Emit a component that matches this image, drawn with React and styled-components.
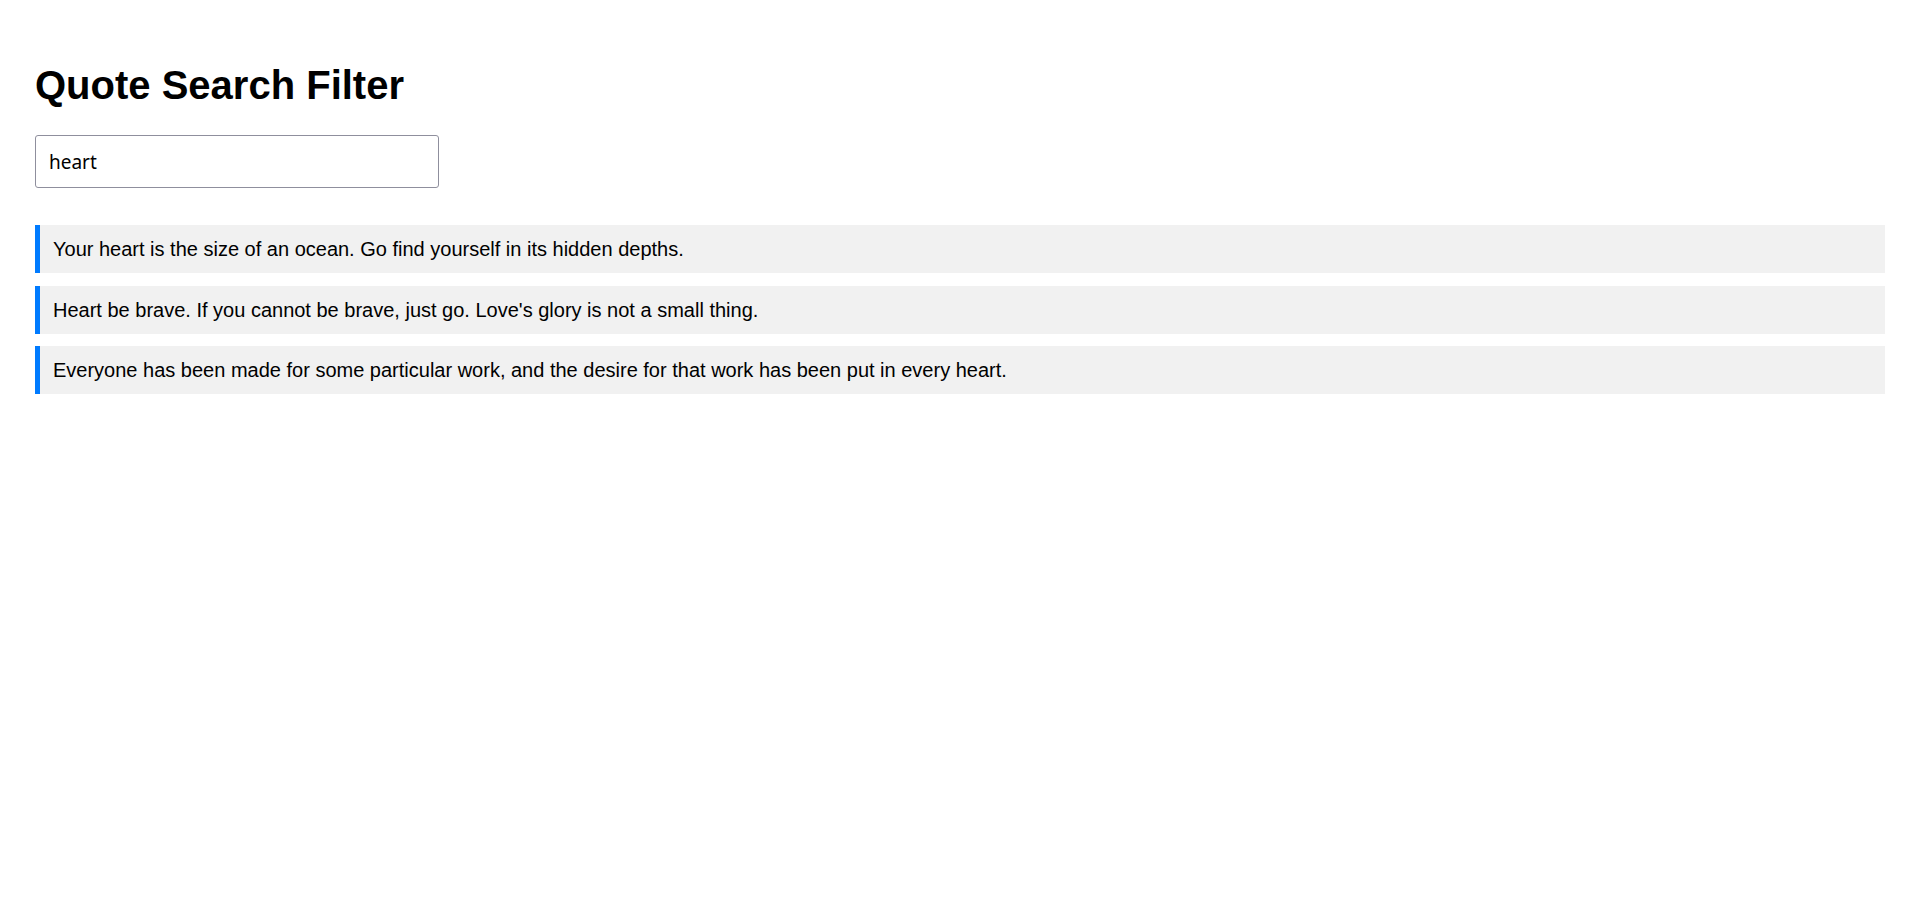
import styled, { createGlobalStyle } from "styled-components"
import { useState } from "react"

const quotes = [
    "Your heart is the size of an ocean. Go find yourself in its hidden depths.",
    "Heart be brave. If you cannot be brave, just go. Love's glory is not a small thing.",
    "Everyone has been made for some particular work, and the desire for that work has been put in every heart.",
    "The wound is the place where the Light enters you.",
    "Silence is the language of god, all else is poor translation.",
]

export default function App(){
    const [busca, setBusca] = useState("heart")

    const filtradas = quotes.filter(q => q.toLowerCase().includes(busca.toLowerCase()))

    return(
        <>
            <Global />
            <Pagina>
                <Titulo>Quote Search Filter</Titulo>
                <Busca
                    type="text"
                    value={busca}
                    onChange={(e) => setBusca(e.target.value)}
                />
                <Lista>
                    {filtradas.map((q) => (
                        <Citacao key={q}>{q}</Citacao>
                    ))}
                </Lista>
            </Pagina>
        </>
    )
}

const Global = createGlobalStyle`
    * {
        box-sizing: border-box;
    }
    body {
        margin: 0;
        background-color: #ffffff;
        font-family: "Liberation Sans", Arial, sans-serif;
    }
`
const Pagina = styled.div`
    padding: 62px 35px 0 35px;
`
const Titulo = styled.h1`
    margin: 0 0 27px;
    font-family: "Liberation Sans", Arial, sans-serif;
    font-size: 40px;
    font-weight: 700;
    line-height: 46px;
    color: #000000;
`
const Busca = styled.input`
    display: block;
    width: 404px;
    height: 53px;
    padding: 0 13px;
    border: 1px solid #8f8f9d;
    border-radius: 3px;
    font-family: "Noto Sans", "Open Sans", sans-serif;
    font-size: 19px;
    color: #000000;
    background-color: #ffffff;
    outline: none;
`
const Lista = styled.div`
    margin-top: 37px;
    display: flex;
    flex-direction: column;
    gap: 12.5px;
`
const Citacao = styled.div`
    background-color: #f1f1f1;
    border-left: 5px solid #007bff;
    padding: 12px 13px;
    font-family: "Liberation Sans", Arial, sans-serif;
    font-size: 20px;
    line-height: 24px;
    color: #000000;
`
